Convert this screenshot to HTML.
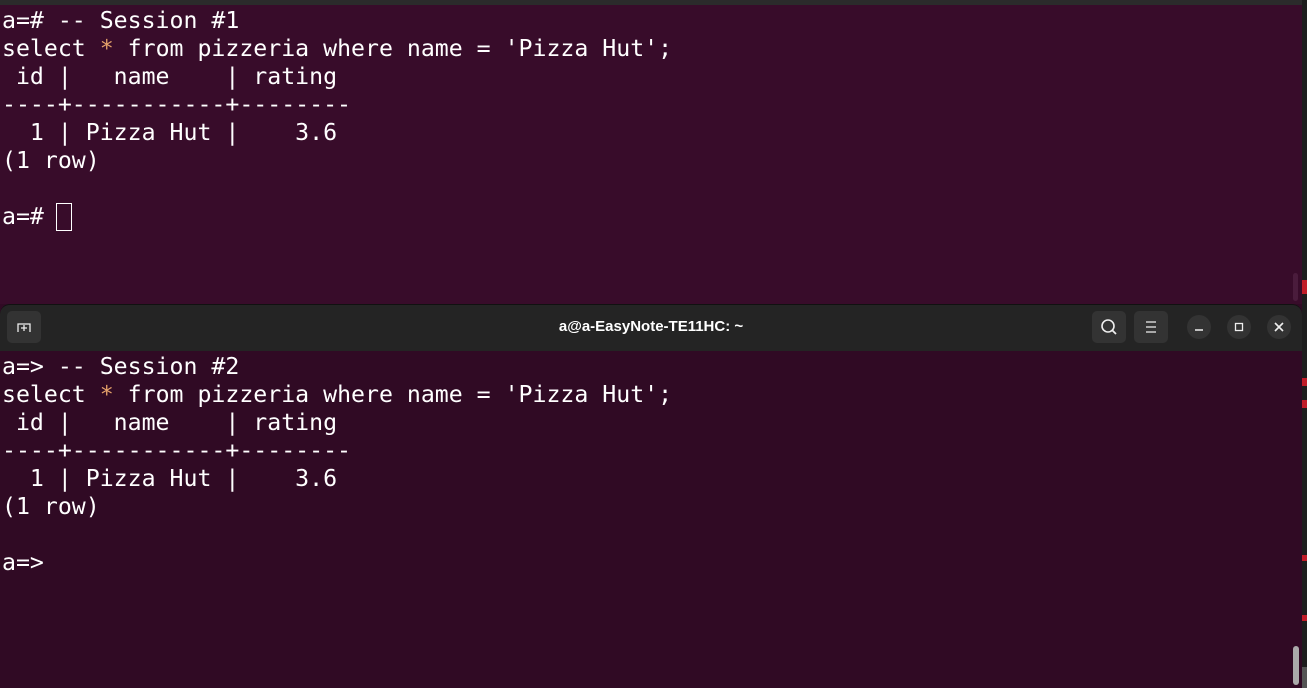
<!DOCTYPE html>
<html><head><style>
body{margin:0;width:1307px;height:688px;overflow:hidden;background:#300a24;position:relative;font-family:"DejaVu Sans Mono","Liberation Mono",monospace}
.t{position:absolute;left:2px;white-space:pre;color:#fff;font-size:23.2px;line-height:28px}
.o{color:#e5a26a}
#top{position:absolute;left:0;top:0;width:1302px;height:304px;background:#380c2a}
#bar{position:absolute;left:0;top:0;width:1307px;height:5px;background:#2b2b2b}
#hdr{position:absolute;left:0;top:304px;width:1302px;height:46px;background:#242424;border-radius:10px 10px 0 0;border-top:1px solid #111}
#strip{position:absolute;left:1302px;top:0;width:5px;height:688px;background:#1d1d1d}
.btn{position:absolute;background:#333;border-radius:5px}
.cb{position:absolute;width:24px;height:24px;border-radius:50%;background:#333;top:315px}
.title{position:absolute;top:304px;left:0;width:1302px;text-align:center;height:46px;line-height:46px;color:#fff;font-family:"Liberation Sans",sans-serif;font-weight:bold;font-size:15px}
</style></head><body>
<div id="top"></div>
<div id="bar"></div>
<div id="strip"></div>
<div style="position:absolute;left:1302px;top:280px;width:5px;height:14px;background:#c01c28"></div>
<div style="position:absolute;left:1302px;top:378px;width:5px;height:8px;background:#c01c28"></div>
<div style="position:absolute;left:1302px;top:400px;width:5px;height:8px;background:#c01c28"></div>
<div style="position:absolute;left:1302px;top:555px;width:5px;height:6px;background:#c01c28"></div>
<div style="position:absolute;left:1302px;top:615px;width:5px;height:6px;background:#c01c28"></div>
<div style="position:absolute;left:1302px;top:667px;width:5px;height:21px;background:#555"></div>
<div style="position:absolute;left:1293px;top:646px;width:6px;height:39px;border-radius:3px;background:#aaa"></div>
<div style="position:absolute;left:1293px;top:273px;width:5px;height:28px;border-radius:3px;background:#4a1c3c"></div>

<div class="t" style="top:7px">a=# -- Session #1
select <span class="o">*</span> from pizzeria where name = 'Pizza Hut';
 id |   name    | rating
----+-----------+--------
  1 | Pizza Hut |    3.6
(1 row)

a=# </div>
<div style="position:absolute;left:56px;top:203px;width:16px;height:28px;border:1px solid #fff;box-sizing:border-box"></div>

<div id="hdr"></div>
<div class="title">a@a-EasyNote-TE11HC: ~</div>
<div class="btn" style="left:7px;top:311px;width:34px;height:32px">
<svg width="34" height="32"><path d="M11 21v-8h12v8M17 14v6M14 17h6" stroke="#eee" stroke-width="1.3" fill="none"/></svg></div>
<div class="btn" style="left:1092px;top:311px;width:34px;height:32px">
<svg width="34" height="32"><circle cx="16" cy="15" r="6" stroke="#eee" stroke-width="1.6" fill="none"/><path d="M20 19l4 4" stroke="#eee" stroke-width="1.8"/></svg></div>
<div class="btn" style="left:1134px;top:311px;width:34px;height:32px">
<svg width="34" height="32"><path d="M12 11h10M12 16h10M12 21h10" stroke="#eee" stroke-width="1.3"/></svg></div>
<div class="cb" style="left:1187px"><svg width="24" height="24"><path d="M8 15h8" stroke="#eee" stroke-width="1.5"/></svg></div>
<div class="cb" style="left:1227px"><svg width="24" height="24"><rect x="8.5" y="8.5" width="7" height="7" stroke="#eee" stroke-width="1.3" fill="none"/></svg></div>
<div class="cb" style="left:1267px"><svg width="24" height="24"><path d="M8 8l8 8M16 8l-8 8" stroke="#eee" stroke-width="1.6"/></svg></div>

<div class="t" style="top:353px">a=&gt; -- Session #2
select <span class="o">*</span> from pizzeria where name = 'Pizza Hut';
 id |   name    | rating
----+-----------+--------
  1 | Pizza Hut |    3.6
(1 row)

a=&gt; </div>
</body></html>
